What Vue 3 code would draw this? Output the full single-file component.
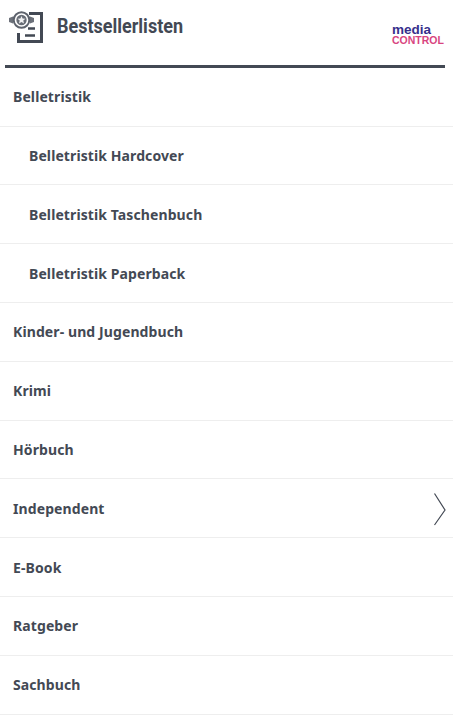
<template>
  <div class="page">
    <header class="head">
      <svg class="icon" width="36" height="36" viewBox="0 0 36 36">
        <path d="M20 5.500h12.500V33.500H9.500V25" fill="none" stroke="#434954" stroke-width="3" />
        <path d="M19 20.500h7M16 27.500h10" stroke="#434954" stroke-width="2.500" fill="none" />
        <path d="M0 10l4-1.500v7L0 14zM25 10l-4-1.500v7l4-1.500z" fill="#6c717a" />
        <circle cx="12.500" cy="12" r="7.800" fill="#fff" stroke="#5d626c" stroke-width="2" />
        <circle cx="12.500" cy="12" r="5.200" fill="#686d76" />
        <path d="M12.500 8l1.100 2.600 2.800.2-2.100 1.800.7 2.800-2.500-1.500-2.500 1.500.7-2.800-2.100-1.800 2.800-.2z" fill="#f1f1f2" />
      </svg>
      <h1 class="title">Bestsellerlisten</h1>
      <div class="logo">
        <span class="logo-top">media</span>
        <span class="logo-bottom">CONTROL</span>
      </div>
    </header>
    <ul class="list">
      <li v-for="item in items" :key="item.label" class="row" :class="{ sub: item.sub }">
        {{ item.label }}
        <svg v-if="item.arrow" class="chev" width="14" height="34" viewBox="0 0 14 34">
          <path d="M1.500 1.500L12 18 1.500 33" fill="none" stroke="#434954" stroke-width="1.200" />
        </svg>
      </li>
    </ul>
  </div>
</template>

<script setup>
const items = [
  { label: "Belletristik" },
  { label: "Belletristik Hardcover", sub: true },
  { label: "Belletristik Taschenbuch", sub: true },
  { label: "Belletristik Paperback", sub: true },
  { label: "Kinder- und Jugendbuch" },
  { label: "Krimi" },
  { label: "Hörbuch" },
  { label: "Independent", arrow: true },
  { label: "E-Book" },
  { label: "Ratgeber" },
  { label: "Sachbuch" },
];
</script>

<style>
html,
body {
  background: #fff;
  overflow: hidden;
}
</style>

<style scoped>
.page {
  width: 453px;
  height: 718px;
  overflow: hidden;
  font-family: "Noto Sans", sans-serif;
  color: #434954;
}
.head {
  display: flex;
  align-items: flex-start;
  height: 64.800px;
  margin: 0 8px 0 5px;
  border-bottom: 3px solid #434954;
}
.icon {
  margin: 8px 0 0 4px;
  flex-shrink: 0;
}
.title {
  margin: 13px 0 0 12px;
  font: bold 20px/26px Roboto, sans-serif;
  transform: scaleX(0.9);
  transform-origin: left center;
  flex: 1;
}
.logo {
  display: flex;
  flex-direction: column;
  margin: 24px 1px 0 0;
  width: 52px;
  font-family: "Liberation Sans", sans-serif;
  font-weight: bold;
}
.logo-top {
  font-size: 13.500px;
  line-height: 12px;
  color: #36308c;
}
.logo-bottom {
  font-size: 10.500px;
  line-height: 9px;
  color: #d8457f;
}
.list {
  list-style: none;
  margin: 0;
  padding: 0;
}
.row {
  position: relative;
  height: 58.800px;
  box-sizing: border-box;
  padding-left: 13px;
  display: flex;
  align-items: center;
  font-size: 14px;
  letter-spacing: 0.100px;
  font-weight: bold;
  border-bottom: 1px solid #eeeeee;
}
.sub {
  padding-left: 29px;
}
.chev {
  position: absolute;
  right: 6px;
  top: 13px;
}
</style>
